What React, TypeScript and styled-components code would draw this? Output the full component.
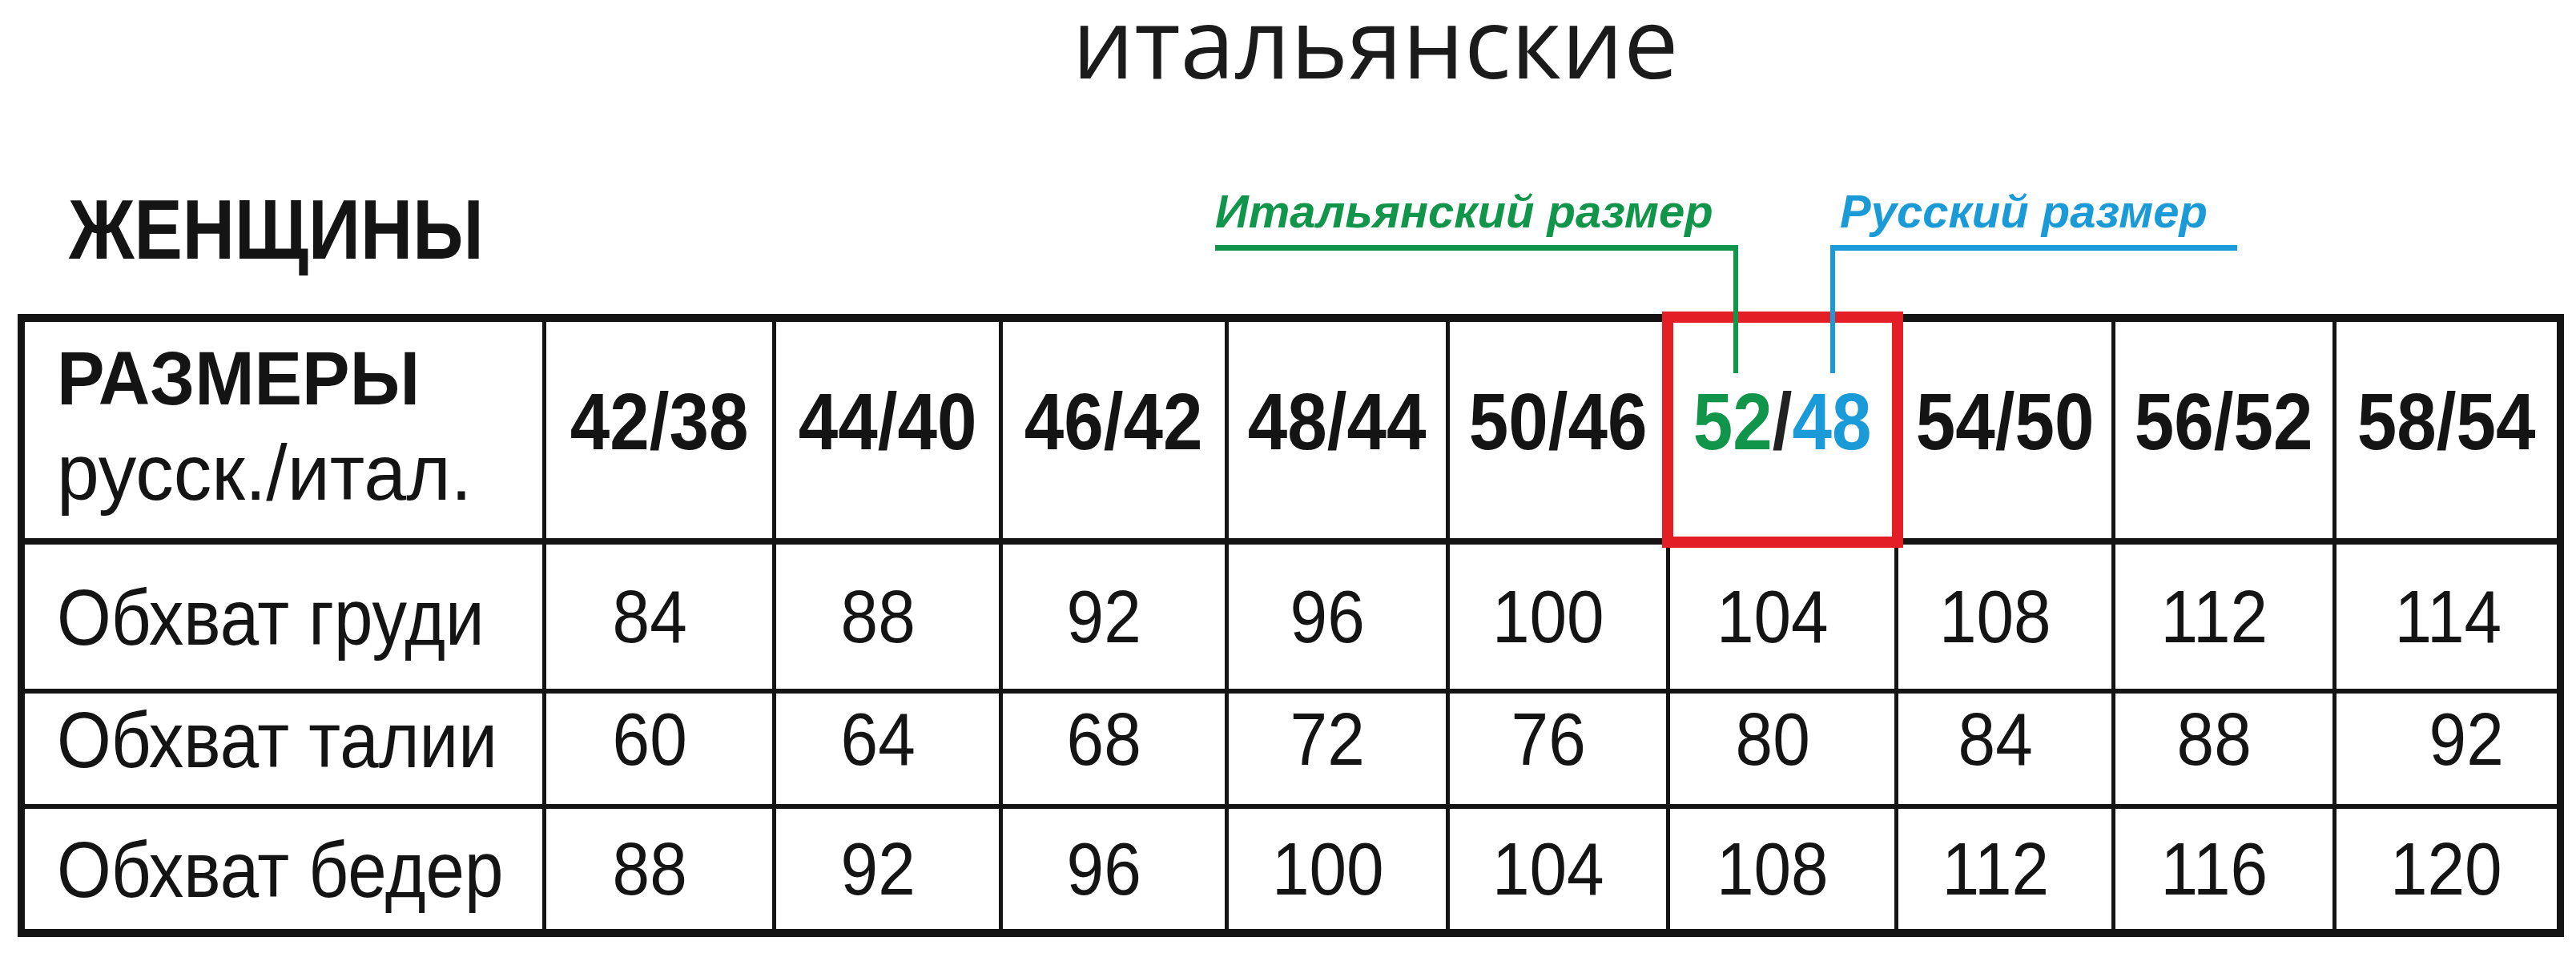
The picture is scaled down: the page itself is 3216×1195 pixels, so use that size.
import styled, { createGlobalStyle, css } from 'styled-components'

const GREEN = '#10954a'
const BLUE = '#1b9ad8'
const RED = '#e31e24'
const INK = '#141414'

const sizes = ['42/38', '44/40', '46/42', '48/44', '50/46', '52/48', '54/50', '56/52', '58/54']
const highlighted = 5

const rows = [
  { label: 'Обхват груди', height: 187, shift: 0, values: [84, 88, 92, 96, 100, 104, 108, 112, 114] },
  { label: 'Обхват талии', height: 144, shift: 24, values: [60, 64, 68, 72, 76, 80, 84, 88, 92] },
  { label: 'Обхват бедер', height: 158, shift: 0, values: [88, 92, 96, 100, 104, 108, 112, 116, 120] }
]

const colWidths = [653, 287, 283, 282, 276, 275, 285, 271, 276, 282]

export default function App() {
  return (
    <>
      <GlobalStyle />
      <Page>
        <Title>итальянские</Title>
        <Heading>
          <Squeeze $x={0.86} $origin="left">ЖЕНЩИНЫ</Squeeze>
        </Heading>

        <Table>
          <colgroup>
            {colWidths.map((w, i) => (
              <col key={i} style={{ width: w }} />
            ))}
          </colgroup>
          <thead>
            <tr>
              <CornerCell>
                <CornerTitle>
                  <Squeeze $x={0.95} $origin="left">РАЗМЕРЫ</Squeeze>
                </CornerTitle>
                <CornerSub>
                  <Squeeze $x={0.97} $origin="left">русск./итал.</Squeeze>
                </CornerSub>
              </CornerCell>
              {sizes.map((size, i) =>
                i === highlighted ? (
                  <SizeCell key={size} $highlight>
                    <Marked>
                      <Callout $side="left" $color={GREEN}>
                        <CalloutLabel $color={GREEN}>Итальянский размер</CalloutLabel>
                      </Callout>
                      <Callout $side="right" $color={BLUE}>
                        <CalloutLabel $color={BLUE} $indent={6}>Русский размер</CalloutLabel>
                      </Callout>
                      <Squeeze $x={0.89}>
                        <Tinted $color={GREEN}>52</Tinted>
                        <Tinted $color="#222">/</Tinted>
                        <Tinted $color={BLUE}>48</Tinted>
                      </Squeeze>
                    </Marked>
                  </SizeCell>
                ) : (
                  <SizeCell key={size}>
                    <Squeeze $x={0.89}>{size}</Squeeze>
                  </SizeCell>
                )
              )}
            </tr>
          </thead>
          <tbody>
            {rows.map((row, r) => (
              <BodyRow key={row.label} $height={row.height} $last={r === rows.length - 1}>
                <LabelCell $shift={row.shift}>
                  <Squeeze $x={0.88} $origin="left">{row.label}</Squeeze>
                </LabelCell>
                {row.values.map((v, i) => (
                  <ValueCell key={i} $shift={row.shift} $end={i === row.values.length - 1}>
                    <Squeeze $x={0.91}>{v}</Squeeze>
                  </ValueCell>
                ))}
              </BodyRow>
            ))}
          </tbody>
        </Table>
      </Page>
    </>
  )
}

const GlobalStyle = createGlobalStyle`
  * {
    box-sizing: border-box;
  }

  html, body {
    margin: 0;
    background: #ffffff;
  }
`

const Page = styled.main`
  width: 3216px;
  min-height: 1195px;
  padding: 0 15px 0 22px;
  background: #ffffff;
  color: ${INK};
  font-family: 'Liberation Sans', Arial, sans-serif;
  overflow: hidden;
`

const Title = styled.h1`
  margin: 0;
  padding-left: 211px;
  text-align: center;
  font-family: 'Open Sans', 'DejaVu Sans', sans-serif;
  font-size: 122px;
  font-weight: 400;
  line-height: 102px;
  color: #1b1b1b;
`

const Heading = styled.h2`
  margin: 132px 0 0;
  padding-left: 64px;
  font-size: 105px;
  font-weight: 700;
  line-height: 1;
  height: 105px;
`

const Squeeze = styled.span<{ $x: number; $origin?: string }>`
  display: inline-block;
  white-space: nowrap;
  transform: scaleX(${(p) => p.$x});
  transform-origin: ${(p) => p.$origin ?? 'center'};
`

const Table = styled.table`
  margin-top: 53px;
  width: 3179px;
  table-layout: fixed;
  border-collapse: collapse;
  border: 9px solid ${INK};
  border-top-width: 10px;
`

const CornerCell = styled.th`
  height: 279px;
  padding: 24px 0 0 40px;
  vertical-align: top;
  text-align: left;
  border-right: 5px solid ${INK};
  border-bottom: 8px solid ${INK};
`

const CornerTitle = styled.div`
  font-size: 94px;
  font-weight: 700;
  line-height: 1;
  margin-bottom: 21px;
`

const CornerSub = styled.div`
  font-size: 98px;
  font-weight: 400;
  line-height: 1;
`

const SizeCell = styled.th<{ $highlight?: boolean }>`
  padding: 74px 0 0;
  vertical-align: top;
  text-align: center;
  border-left: 5px solid ${INK};
  border-right: 5px solid ${INK};
  border-bottom: 8px solid ${INK};
  font-size: 100px;
  font-weight: 700;
  line-height: 1;

  ${(p) =>
    p.$highlight &&
    css`
      outline: 14px solid ${RED};
      outline-offset: -6px;
      position: relative;
      z-index: 1;
    `}
`

const Marked = styled.span`
  position: relative;
  display: inline-block;
`

const Tinted = styled.span<{ $color: string }>`
  color: ${(p) => p.$color};
  text-shadow: 0 0 4px #ffffff, 0 0 4px #ffffff;
`

const Callout = styled.span<{ $side: 'left' | 'right'; $color: string }>`
  position: absolute;
  bottom: calc(100% + 10px);
  height: 160px;
  border-top: 7px solid ${(p) => p.$color};

  ${(p) =>
    p.$side === 'left'
      ? css`
          right: calc(50% + 55px);
          width: 653px;
          border-right: 6px solid ${p.$color};
        `
      : css`
          left: calc(50% + 60px);
          width: 508px;
          border-left: 6px solid ${p.$color};
        `}
`

const CalloutLabel = styled.span<{ $color: string; $indent?: number }>`
  position: absolute;
  left: ${(p) => p.$indent ?? 0}px;
  bottom: calc(100% + 20px);
  white-space: nowrap;
  color: ${(p) => p.$color};
  font-size: 58px;
  font-style: italic;
  font-weight: 700;
  line-height: 1;
`

const BodyRow = styled.tr<{ $height: number; $last?: boolean }>`
  height: ${(p) => p.$height}px;

  & > td {
    border-bottom: ${(p) => (p.$last ? 10 : 6)}px solid ${INK};
  }
`

const LabelCell = styled.td<{ $shift: number }>`
  padding: 0 0 ${(p) => p.$shift}px 40px;
  vertical-align: middle;
  text-align: left;
  border-right: 5px solid ${INK};
  font-size: 99px;
  line-height: 1;
`

const ValueCell = styled.td<{ $shift: number; $end?: boolean }>`
  padding: 0 ${(p) => (p.$end ? 62 : 24)}px ${(p) => p.$shift}px 0;
  vertical-align: middle;
  text-align: ${(p) => (p.$end ? 'right' : 'center')};
  border-left: 5px solid ${INK};
  border-right: 5px solid ${INK};
  font-size: 92px;
  line-height: 1;
`
